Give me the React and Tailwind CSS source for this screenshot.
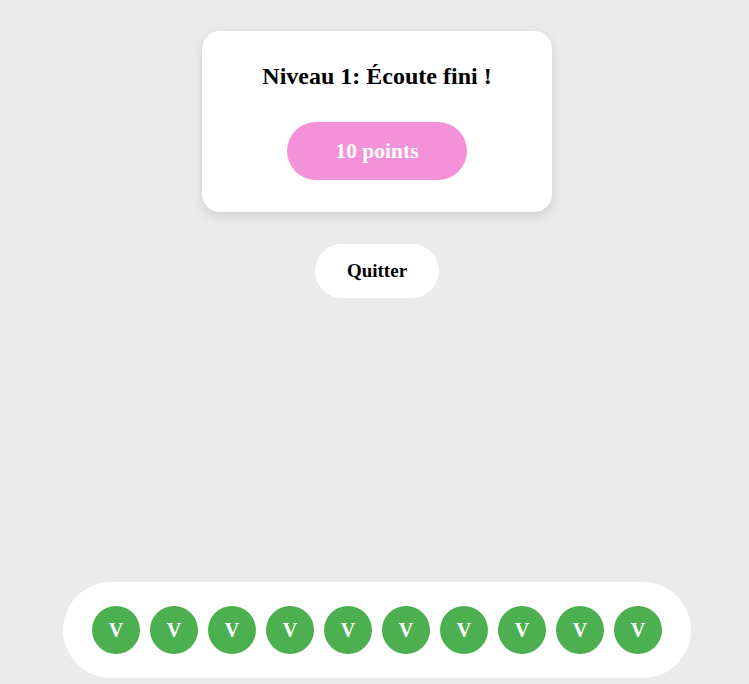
import React from 'react';

const dots = Array.from({ length: 10 });

export default function App() {
  return (
    <div
      className="min-h-screen bg-[#ebebeb] flex flex-col items-center pl-[5px]"
      style={{ fontFamily: '"Liberation Serif", "Times New Roman", serif' }}
    >
      {/* Result card */}
      <div className="mt-[31px] w-[350px] h-[181px] bg-white rounded-[18px] shadow-[0_4px_12px_rgba(0,0,0,0.12)] flex flex-col items-center pt-[32px]">
        <h2 className="text-[24px] font-bold text-black leading-[27px]">Niveau 1: Écoute fini !</h2>
        <div className="mt-[32px] w-[180px] h-[58px] rounded-full bg-[#f492d9] flex items-center justify-center text-white text-[21.5px] font-bold">
          10 points
        </div>
      </div>

      <button className="mt-[32px] w-[124px] h-[54px] rounded-full bg-white text-black text-[19px] font-bold flex items-center justify-center">
        Quitter
      </button>

      {/* Progress bar */}
      <div className="mt-auto mb-[6px] w-[628px] h-[96px] bg-white rounded-full flex items-center justify-center gap-[10px]">
        {dots.map((_, i) => (
          <div
            key={i}
            className="w-[48px] h-[48px] rounded-full bg-[#4caf50] flex items-center justify-center text-white text-[20px] font-bold"
          >
            V
          </div>
        ))}
      </div>
    </div>
  );
}
